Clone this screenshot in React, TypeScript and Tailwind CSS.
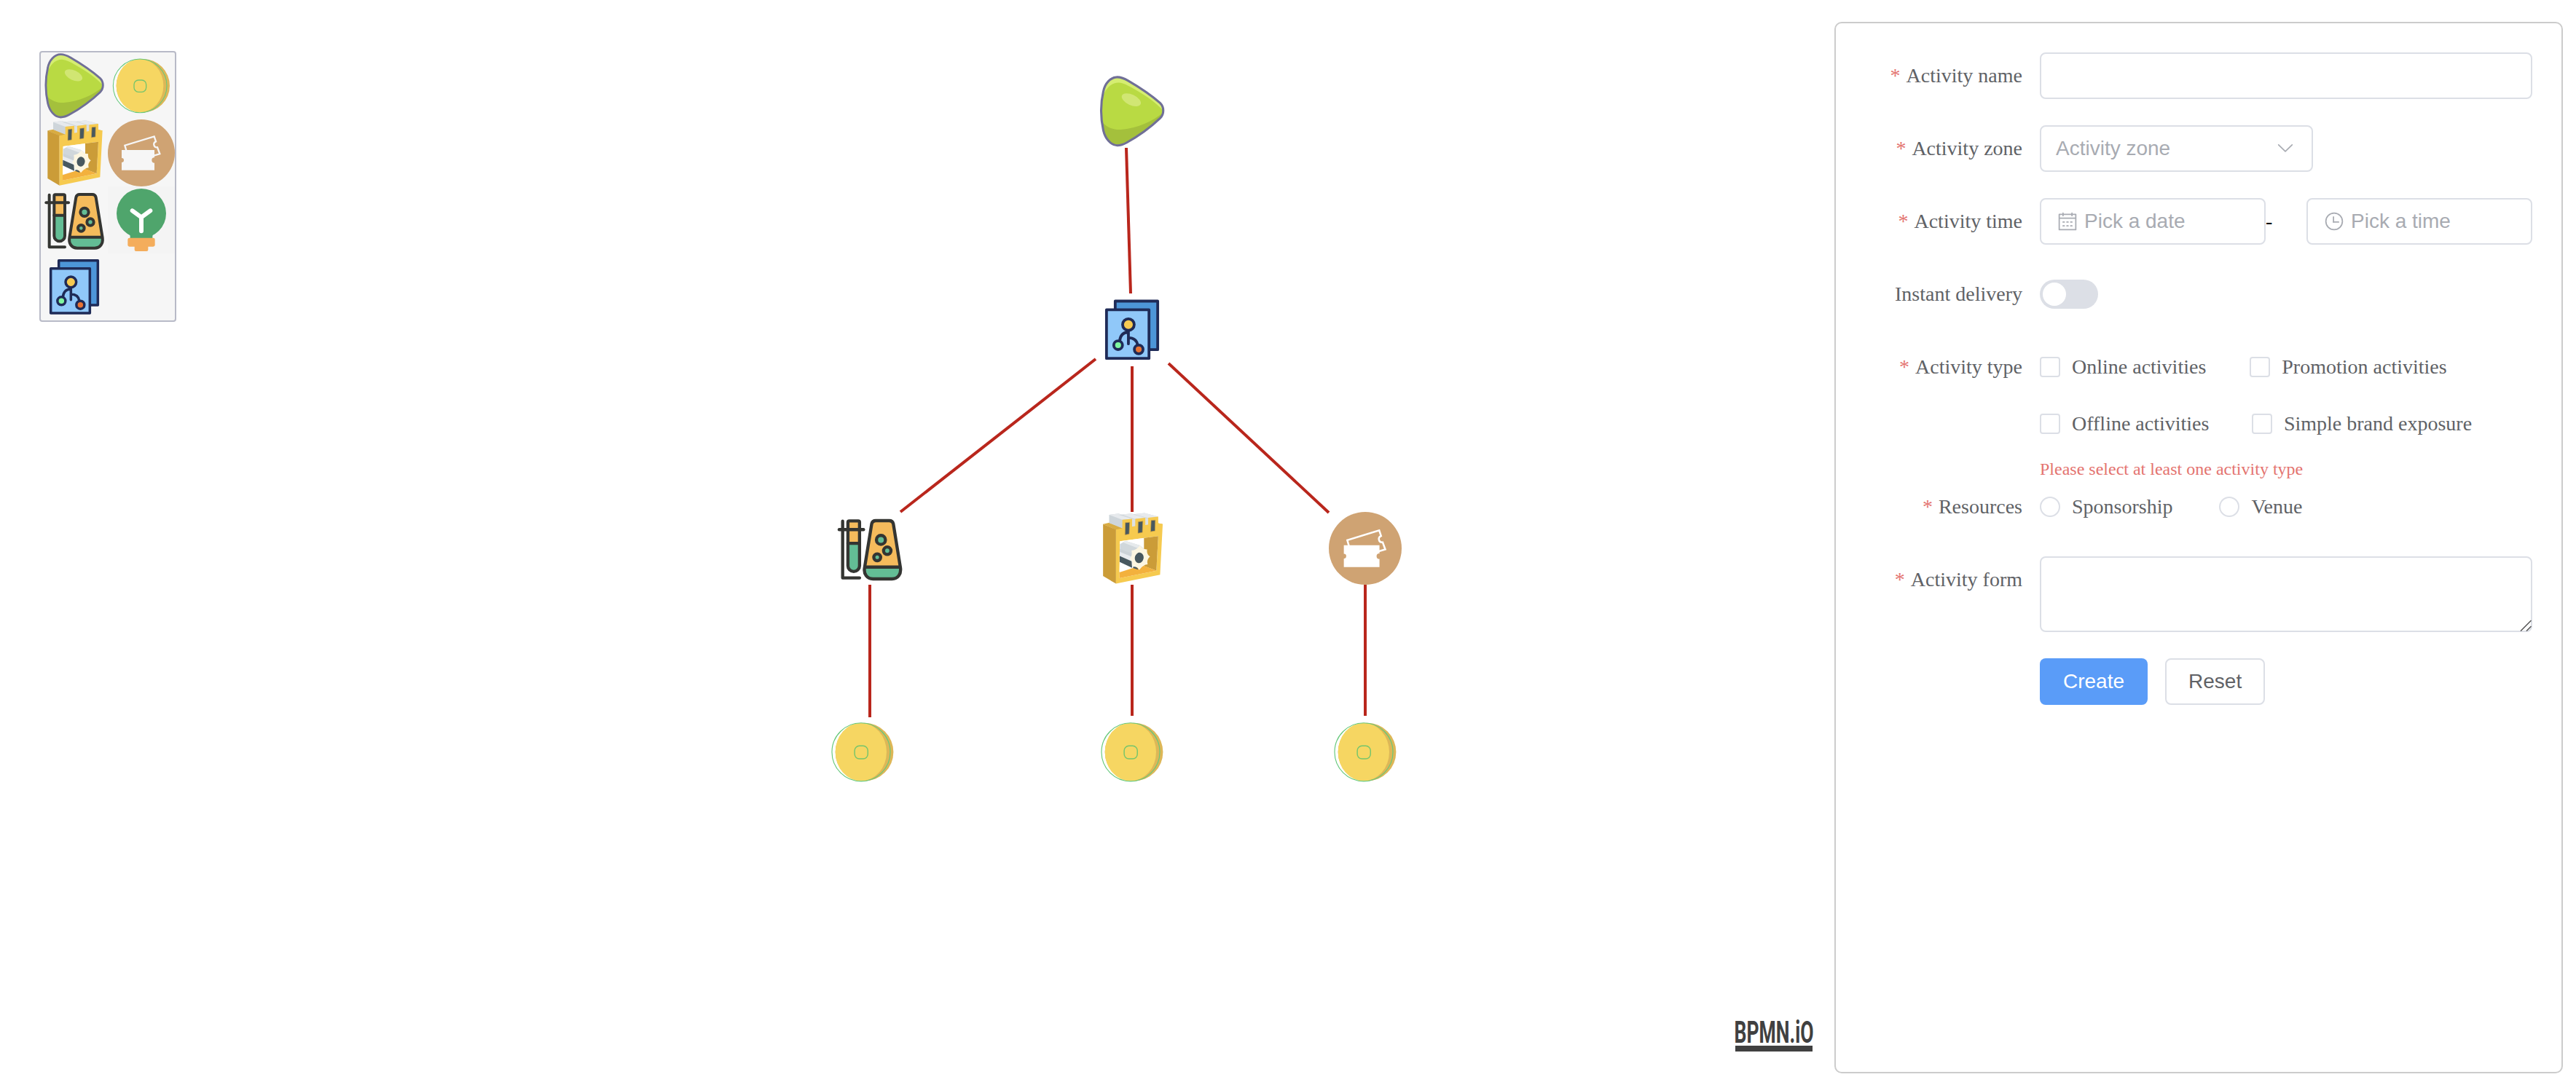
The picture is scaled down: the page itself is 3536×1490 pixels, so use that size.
import type { ReactNode } from "react";

type IconProps = { className?: string; paper?: string };

const Frame = ({ className = "", children }: { className?: string; children: ReactNode }) => (
  <svg viewBox="0 0 276 276" className={"block " + className}>
    {children}
  </svg>
);

const PlayIcon = ({ className }: IconProps) => {
  const d =
    "M82 8C98 8 108 13 122 21C165 46 210 76 244 106C260 122 260 148 244 164C206 200 165 230 118 256C104 264 94 267 82 267C56 266 36 240 29 210C18 160 18 110 29 62C35 32 56 8 82 8Z";
  return (
    <Frame className={className}>
      <clipPath id="play-shape">
        <path d={d} />
      </clipPath>
      <g clipPath="url(#play-shape)">
        <rect width="276" height="276" fill="#b9da43" />
        <path d="M22 95C36 50 60 28 88 29C104 30 120 38 140 50C190 78 230 105 258 138L276 0H0Z" fill="#d5ed71" />
        <path d="M20 174C45 205 75 208 95 207C160 202 220 175 260 138V276H0Z" fill="#a4c03c" />
      </g>
      <ellipse cx="135" cy="94" rx="39" ry="20" transform="rotate(25 135 94)" fill="#d1e673" />
      <path d={d} fill="none" stroke="#706f97" strokeWidth="8.5" />
    </Frame>
  );
};

const CoinIcon = ({ className }: IconProps) => (
  <Frame className={className}>
    <circle cx="133" cy="138" r="110" fill="#ffffff" fillOpacity="0.6" />
    <circle cx="145" cy="137" r="110" fill="#ddb757" />
    <ellipse cx="132" cy="137" rx="97" ry="110" fill="#f6d662" />
    <circle cx="132.500" cy="137.500" r="110.500" fill="none" stroke="#66c87b" strokeWidth="3.200" />
    <rect x="108" y="114" width="50" height="49" rx="18" fill="none" stroke="#74c56c" strokeWidth="4" />
  </Frame>
);

const MillIcon = ({ className }: IconProps) => (
  <Frame className={className}>
    <path d="M28 46L52 41L102 60L102 64L77 68Z" fill="#d9ac42" />
    <path d="M230 42L254 46L237 52Z" fill="#d9ac42" />
    <path d="M51 11L87 6L138 26L150 55L138 60L101 62L51 42Z" fill="#ced5da" />
    <path d="M51 11L87 6L138 26L101 30Z" fill="#e7eaed" />
    <path d="M87 11L135 6L188 22L199 50L188 54L150 56L138 50V26Z" fill="#d3d9dd" />
    <path d="M100 10L135 6L188 22L150 27Z" fill="#e7eaed" />
    <path d="M140 9L185 4L237 18L210 52H192L188 22Z" fill="#d3d9dd" />
    <path d="M148 9L185 4L237 18L199 23Z" fill="#e7eaed" />
    <path d="M138 27L150 31V54L138 56Z" fill="#dde1e4" />
    <path d="M188 23L199 27V48L188 50Z" fill="#dde1e4" />
    <path d="M28 46L77 67V272L28 243Z" fill="#cb9c38" />
    <path
      fillRule="evenodd"
      d="M77 67L101 62V30L138 26V56L150 54V26L188 22V50L199 48V22L237 18V43L254 46L244 238L77 272ZM92 111L90 251L230 223L237 92Z"
      fill="#f6ca4f"
    />
    <path d="M112 41L129 39L127 84L111 87Z M161 37L179 35L177 78L160 81Z M210 32L226 31L225 72L208 75Z" fill="#48585f" stroke="#d2a545" strokeWidth="2" />
    <path d="M92 111L237 92L183 100V205L90 226Z" fill="#ffffff" />
    <path d="M183 99L237 92L230 223L183 205Z" fill="#cb9c38" />
    <path d="M90 229L150 210L183 204L230 223L90 251Z" fill="#f3b13d" />
    <path d="M92 122L113 110L166 126L182 140L150 180L92 152Z" fill="#d0d7db" />
    <path d="M113 110L166 126L182 138L172 142L104 116Z" fill="#e6eaec" />
    <path d="M92 146L140 168L150 186L138 196L90 170Z" fill="#e8ebee" />
    <path d="M92 140L134 156L142 172L92 152Z" fill="#cbd2d7" />
    <path d="M91 167L136 187L138 212L91 190Z" fill="#48585f" />
    <path d="M141 209C150 205 160 212 161 219L143 213Z" fill="#48585f" />
    <path
      d="M168 127Q176 143 195 142Q192 160 206 169Q192 181 197 199Q180 200 165 220Q156 204 138 205Q143 188 129 178Q140 166 136 146Q154 146 168 127Z"
      fill="#fdf6e1"
    />
    <ellipse cx="165" cy="174" rx="16.500" ry="20" fill="#48585f" transform="rotate(12 165 174)" />
  </Frame>
);

const TicketIcon = ({ className, paper = "#ffffff" }: IconProps) => (
  <Frame className={className}>
    <circle cx="138" cy="138" r="138" fill="#cfa373" />
    <path d="M76 128L70 107L191 70L198 91C184 97 189 117 204 115L214 142L190 149" fill="none" stroke={paper} strokeWidth="7" />
    <path d="M57 126H192V159A9 9 0 0 0 192 177V209H57V177A9 9 0 0 0 57 159Z" fill={paper} />
    <path d="M192 159A9 9 0 0 0 192 177" fill="#cfa373" stroke="#cfa373" strokeWidth="4" />
  </Frame>
);

const FlaskIcon = ({ className }: IconProps) => (
  <Frame className={className}>
    <path d="M55 34H100V119H55Z" fill="#f5bb5c" />
    <path d="M55 119H100V204A22 22 0 0 1 55 204Z" fill="#63bd95" />
    <path d="M148 34H224L253 209H118Z" fill="#f5bb5c" />
    <path d="M118 209H254C258 235 245 254 222 254H148C125 254 113 235 118 209Z" fill="#63bd95" />
    <g fill="none" stroke="#343532" strokeWidth="12" strokeLinecap="round" strokeLinejoin="round">
      <path d="M35 35V250H99" />
      <path d="M22 67H114" />
      <path d="M60 34H94Q99 34 99 39V204A22 22 0 0 1 55 204V39Q55 34 60 34Z" />
      <path d="M55 119H99" />
      <path d="M160 33H212Q224 33 227 45L254 212C257 235 245 254 222 254H150C127 254 114 235 118 212L145 45Q148 33 160 33Z" />
      <path d="M120 209H252" />
      <g fill="#63bd95">
        <circle cx="180" cy="106" r="17" />
        <circle cx="204" cy="147" r="14" />
        <circle cx="166" cy="172" r="13" />
      </g>
    </g>
  </Frame>
);

const BulbIcon = ({ className }: IconProps) => (
  <Frame className={className}>
    <rect width="276" height="276" fill="#f4f4f4" />
    <circle cx="138" cy="111" r="102" fill="#4fa56c" />
    <path d="M85 195Q92 197 92 204V214H184V204Q184 197 191 195Z" fill="#4fa56c" />
    <rect x="82" y="212" width="112" height="36" rx="7" fill="#f4ad5c" />
    <rect x="110" y="240" width="56" height="27" rx="6" fill="#f4ad5c" />
    <path d="M101 100L138 127L175 100M138 127V184" fill="none" stroke="#ffffff" strokeWidth="18" strokeLinecap="round" strokeLinejoin="round" />
  </Frame>
);

const BlueprintIcon = ({ className }: IconProps) => (
  <Frame className={className}>
    <g stroke="#1f2b57" strokeWidth="10.500" strokeLinejoin="round" strokeLinecap="round">
      <rect x="74" y="29" width="161" height="184" fill="#4d96d8" />
      <rect x="41" y="62" width="161" height="184" fill="#90c8f9" />
      <path d="M124 142V191M122 147C104 148 93 160 91 180M124 168C143 168 156 178 159 196" fill="none" />
      <circle cx="124" cy="118" r="22" fill="#f6ca52" />
      <circle cx="85" cy="196" r="16.500" fill="#7ff7a0" />
      <circle cx="163" cy="212" r="16.500" fill="#e97434" />
    </g>
  </Frame>
);

const palette = [PlayIcon, CoinIcon, MillIcon, TicketIcon, FlaskIcon, BulbIcon, BlueprintIcon];

const nodes = [
  { Icon: PlayIcon, x: 1504, y: 103 },
  { Icon: BlueprintIcon, x: 1504, y: 403 },
  { Icon: FlaskIcon, x: 1144, y: 703 },
  { Icon: MillIcon, x: 1504, y: 703 },
  { Icon: TicketIcon, x: 1824, y: 703 },
  { Icon: CoinIcon, x: 1134, y: 983 },
  { Icon: CoinIcon, x: 1504, y: 983 },
  { Icon: CoinIcon, x: 1824, y: 983 },
];

const edges = [
  "M1546 203L1552 403",
  "M1504 493L1236 703",
  "M1554 503V703",
  "M1604 499L1824 704",
  "M1194 803V985",
  "M1554 803V983",
  "M1874 803V983",
];

const Canvas = () => (
  <main className="relative h-[1490px] w-[2518px] shrink-0 overflow-hidden">
    <svg viewBox="0 0 2518 1490" className="absolute inset-0 h-full w-full">
      {edges.map((d) => (
        <path key={d} d={d} fill="none" stroke="#b9261c" strokeWidth="4" />
      ))}
    </svg>
    {nodes.map(({ Icon, x, y }) => (
      <div key={x + "-" + y} className="absolute size-[100px]" style={{ left: x, top: y }}>
        <Icon className="size-full" />
      </div>
    ))}
    <div className="absolute top-[70px] left-[54px] grid h-[372px] w-[188px] auto-rows-[92px] grid-cols-2 rounded-[4px] border-2 border-[#b8bac7] bg-[#f6f6f6]">
      {palette.map((Icon, i) => (
        <Icon key={i} className="size-[92px]" paper="#f6f6f6" />
      ))}
    </div>
    <svg viewBox="0 0 126 64" className="absolute top-[1390px] left-[2372px] h-16 w-[126px]">
      <text x="8.500" y="42" textLength="109" lengthAdjust="spacingAndGlyphs" className="font-['Roboto',sans-serif] text-[42px] font-bold" fill="#404040">
        BPMN.iO
      </text>
      <rect x="10" y="46" width="106" height="8" fill="#404040" />
    </svg>
  </main>
);

const Row = ({ label, required = true, className = "", children }: { label?: string; required?: boolean; className?: string; children: ReactNode }) => (
  <div className={"flex items-start " + className}>
    <div className="flex h-16 w-60 shrink-0 items-center justify-end pr-6">
      {label && required && <span className="mr-2 text-[#e47470]">*</span>}
      {label && <span>{label}</span>}
    </div>
    <div className="flex min-h-16 flex-1 items-center">{children}</div>
  </div>
);

const CalendarIcon = () => (
  <svg viewBox="0 0 1024 1024" className="size-7 shrink-0" fill="currentColor">
    <path d="M128 384v512h768V192H768v32a32 32 0 1 1-64 0v-32H320v32a32 32 0 0 1-64 0v-32H128v128h768v64zm192-256h384V96a32 32 0 1 1 64 0v32h160a32 32 0 0 1 32 32v768a32 32 0 0 1-32 32H96a32 32 0 0 1-32-32V160a32 32 0 0 1 32-32h160V96a32 32 0 0 1 64 0zm-32 384h64a32 32 0 0 1 0 64h-64a32 32 0 0 1 0-64zm0 192h64a32 32 0 1 1 0 64h-64a32 32 0 1 1 0-64zm192-192h64a32 32 0 0 1 0 64h-64a32 32 0 0 1 0-64zm0 192h64a32 32 0 1 1 0 64h-64a32 32 0 1 1 0-64zm192-192h64a32 32 0 1 1 0 64h-64a32 32 0 1 1 0-64zm0 192h64a32 32 0 1 1 0 64h-64a32 32 0 1 1 0-64z" />
  </svg>
);

const ClockIcon = () => (
  <svg viewBox="0 0 1024 1024" className="size-7 shrink-0" fill="currentColor">
    <path d="M512 896a384 384 0 1 0 0-768 384 384 0 0 0 0 768m0 64a448 448 0 1 1 0-896 448 448 0 0 1 0 896" />
    <path d="M480 256a32 32 0 0 1 32 32v256a32 32 0 0 1-64 0V288a32 32 0 0 1 32-32" />
    <path d="M480 512h256q32 0 32 32t-32 32H480q-32 0-32-32t32-32" />
  </svg>
);

const Picker = ({ icon, text }: { icon: ReactNode; text: string }) => (
  <div className="flex h-16 w-[310px] items-center gap-[9px] rounded-lg border-2 border-[#dcdfe6] pl-[22px] font-['Liberation_Sans',sans-serif] text-[#a8abb2]">
    {icon}
    <span>{text}</span>
  </div>
);

const Choice = ({ label, round = false, className = "" }: { label: string; round?: boolean; className?: string }) => (
  <label className={"flex h-16 items-center gap-4 " + className}>
    <span className={(round ? "rounded-full" : "rounded-[4px]") + " size-7 border-2 border-[#dcdfe6] bg-white"} />
    <span>{label}</span>
  </label>
);

const FormPanel = () => (
  <aside className="mt-[30px] h-[1444px] w-[1000px] shrink-0 rounded-[10px] border-2 border-[#cccccc] p-10 font-['Liberation_Serif',serif] text-[28px] leading-8 text-[#606266]">
    <Row label="Activity name" className="mb-9">
      <div className="h-16 w-full rounded-lg border-2 border-[#dcdfe6]" />
    </Row>
    <Row label="Activity zone" className="mb-9">
      <div className="flex h-16 w-[375px] items-center justify-between rounded-lg border-2 border-[#dcdfe6] pr-[22px] pl-5 font-['Liberation_Sans',sans-serif] text-[#a8abb2]">
        <span>Activity zone</span>
        <svg viewBox="0 0 1024 1024" className="mb-0.5 size-7" fill="currentColor">
          <path d="M831.872 340.864 512 652.672 192.128 340.864a30.592 30.592 0 0 0-42.752 0 29.12 29.12 0 0 0 0 41.6L489.664 714.24a32 32 0 0 0 44.672 0l340.288-331.712a29.12 29.12 0 0 0 0-41.728 30.592 30.592 0 0 0-42.752 0z" />
        </svg>
      </div>
    </Row>
    <Row label="Activity time" className="mb-9">
      <Picker icon={<CalendarIcon />} text="Pick a date" />
      <span className="w-14 text-black">-</span>
      <Picker icon={<ClockIcon />} text="Pick a time" />
    </Row>
    <Row label="Instant delivery" required={false} className="mb-9">
      <div className="flex h-10 w-20 items-center rounded-full bg-[#dcdfe6] pl-1">
        <span className="size-8 rounded-full bg-white" />
      </div>
    </Row>
    <Row label="Activity type">
      <div className="flex flex-col gap-[14px]">
        <div className="flex gap-[60px]">
          <Choice label="Online activities" />
          <Choice label="Promotion activities" />
        </div>
        <div className="flex gap-[58.5px]">
          <Choice label="Offline activities" />
          <Choice label="Simple brand exposure" />
        </div>
      </div>
    </Row>
    <div className="flex h-[50px] items-center pt-[10px] pl-60 text-2xl text-[#e47470]">Please select at least one activity type</div>
    <Row label="Resources" className="mb-9">
      <Choice label="Sponsorship" round />
      <Choice label="Venue" round className="ml-16" />
    </Row>
    <Row label="Activity form" className="mb-9">
      <div className="relative h-[104px] w-full rounded-lg border-2 border-[#dcdfe6]">
        <svg viewBox="0 0 16 16" className="absolute right-[-1px] bottom-[-1px] size-4" fill="none" stroke="#555555" strokeWidth="1.500">
          <path d="M1 15.500L15.500 1M9 15.500L15.500 9" />
        </svg>
      </div>
    </Row>
    <Row>
      <div className="flex gap-6 font-['Liberation_Sans',sans-serif]">
        <button className="h-16 rounded-lg bg-[#5a9cf8] px-8 text-white">Create</button>
        <button className="h-16 rounded-lg border-2 border-[#dcdfe6] bg-white px-[30px]">Reset</button>
      </div>
    </Row>
  </aside>
);

export default function App() {
  return (
    <div className="flex h-[1490px] w-[3536px] overflow-hidden bg-white">
      <Canvas />
      <FormPanel />
    </div>
  );
}
